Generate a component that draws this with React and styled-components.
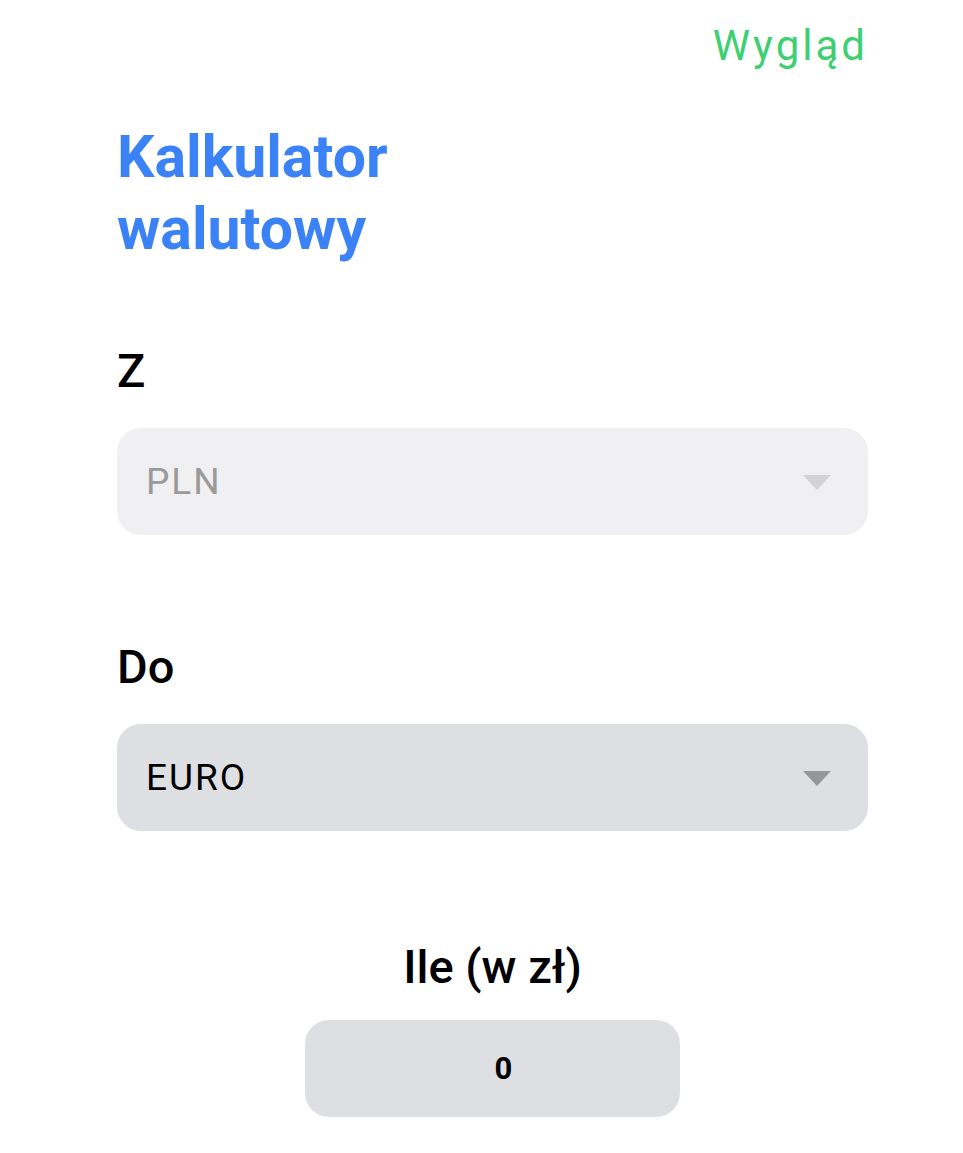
import React from "react";
import styled, { createGlobalStyle } from "styled-components";

const Global = createGlobalStyle`
  html, body { margin: 0; padding: 0; background: #ffffff; }
  body { font-family: Roboto, "Noto Sans", sans-serif; }
`;

const Page = styled.div`
  width: 963px;
  min-height: 1153px;
  box-sizing: border-box;
  padding: 20px 95px 0 117px;
  display: flex;
  flex-direction: column;
`;

const TopBar = styled.div`
  display: flex;
  justify-content: flex-end;
`;

const TextButton = styled.button`
  border: none;
  background: none;
  padding: 0;
  font-family: Roboto, sans-serif;
  font-size: 42px;
  letter-spacing: 3px;
  line-height: 52px;
  color: #3ecf73;
  cursor: pointer;
`;

const Title = styled.h1`
  margin: 49px 0 0;
  font-family: Roboto, sans-serif;
  font-weight: 700;
  font-size: 59px;
  line-height: 72px;
  color: #3b82f6;
`;

const Label = styled.div`
  font-family: Roboto, sans-serif;
  font-weight: 500;
  font-size: 47px;
  line-height: 56px;
  color: #000;
  margin-top: ${(p) => p.$mt || 0}px;
  text-align: ${(p) => (p.$center ? "center" : "left")};
`;

const Select = styled.div`
  margin-top: 29px;
  height: 107px;
  border-radius: 24px;
  background: ${(p) => (p.$disabled ? "#f0f0f2" : "#dedfe3")};
  display: flex;
  align-items: center;
  justify-content: space-between;
  padding: 0 37px 0 29px;
  box-sizing: border-box;
`;

const SelectText = styled.span`
  font-family: Roboto, sans-serif;
  font-size: 37px;
  letter-spacing: 2px;
  color: ${(p) => (p.$disabled ? "#9a9a9a" : "#000")};
`;

const Caret = styled.span`
  width: 0;
  height: 0;
  border-left: 14px solid transparent;
  border-right: 14px solid transparent;
  border-top: 15px solid ${(p) => (p.$disabled ? "#d3d3d5" : "#97979a")};
  margin-top: 2px;
`;

const AmountBox = styled.div`
  align-self: center;
  margin-top: 25px;
  width: 375px;
  height: 97px;
  border-radius: 24px;
  background: #dedfe3;
  display: flex;
  align-items: center;
  justify-content: center;
  font-family: Roboto, sans-serif;
  font-weight: 700;
  font-size: 31px;
  color: #000;
  padding-left: 22px;
  box-sizing: border-box;
`;

export default function App() {
  return (
    <>
      <Global />
      <Page>
        <TopBar>
          <TextButton>Wygląd</TextButton>
        </TopBar>
        <Title>
          Kalkulator
          <br />
          walutowy
        </Title>
        <Label $mt={78}>Z</Label>
        <Select $disabled>
          <SelectText $disabled>PLN</SelectText>
          <Caret $disabled />
        </Select>
        <Label $mt={104}>Do</Label>
        <Select>
          <SelectText>EURO</SelectText>
          <Caret />
        </Select>
        <Label $mt={108} $center>
          Ile (w zł)
        </Label>
        <AmountBox>0</AmountBox>
      </Page>
    </>
  );
}
